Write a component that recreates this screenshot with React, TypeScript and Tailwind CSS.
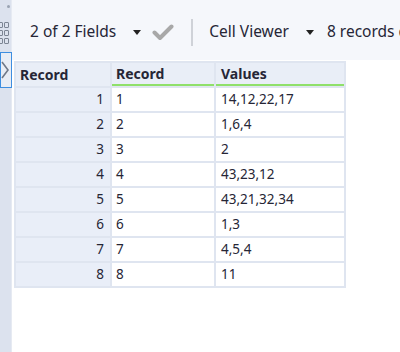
import React from "react";

const rows: [number, string][] = [
  [1, "14,12,22,17"],
  [2, "1,6,4"],
  [3, "2"],
  [4, "43,23,12"],
  [5, "43,21,32,34"],
  [6, "1,3"],
  [7, "4,5,4"],
  [8, "11"],
];

function Caret() {
  return (
    <svg width="8" height="5" viewBox="0 0 8 5" aria-hidden="true">
      <path d="M0 0 L8 0 L4 5 Z" fill="#222" />
    </svg>
  );
}

export default function App() {
  return (
    <div
      className="flex w-[400px] h-[352px] overflow-hidden bg-white text-[#262636]"
      style={{ fontFamily: '"Segoe UI", "Noto Sans", "Open Sans", sans-serif' }}
    >
      {/* Left rail */}
      <div className="w-[12px] shrink-0 bg-[#dce2ee] border-r border-[#e6eaf2] flex flex-col items-start">
        <div className="w-[3px] h-[3px] rounded-full bg-[#9aa3b2] ml-[7px] mt-[5px]" />
        <div className="mt-[14px] grid grid-cols-2 gap-[2px] w-[10px] -ml-[2px]">
          {Array.from({ length: 6 }).map((_, i) => (
            <div key={i} className="w-[5px] h-[6px] border border-[#7c8594] rounded-[1px]" />
          ))}
        </div>
        <div className="mt-[8px] w-[12px] h-[36px] border border-[#3e8ee0] bg-[#e9edf5] flex items-center">
          <svg width="10" height="20" viewBox="0 0 10 20" aria-hidden="true">
            <path d="M1 2 L7 10 L1 18" fill="none" stroke="#707888" strokeWidth="1.6" />
          </svg>
        </div>
      </div>

      {/* Main */}
      <div className="flex-1 flex flex-col min-w-0">
        <div className="h-[60px] shrink-0 pt-[4px] bg-[#f5f7fb] flex items-center whitespace-nowrap text-[15.5px] overflow-hidden">
          <span className="ml-[18px] shrink-0">2 of 2 Fields</span>
          <span className="ml-[17px] mt-[1px] flex shrink-0"><Caret /></span>
          <svg className="ml-[11px] shrink-0" width="22" height="18" viewBox="0 0 22 18" aria-hidden="true">
            <path d="M2.5 9.5 L8 15 L19.5 3.5" fill="none" stroke="#a8a8a8" strokeWidth="4" strokeLinejoin="round" strokeLinecap="round" />
          </svg>
          <div className="ml-[17px] w-[2px] h-[27px] bg-[#cfd2d8] shrink-0" />
          <span className="ml-[16px] shrink-0">Cell Viewer</span>
          <span className="ml-[17px] mt-[1px] flex shrink-0"><Caret /></span>
          <span className="ml-[13px] shrink-0">8 records displayed</span>
        </div>

        <div className="pt-[1px] pl-[2px]">
          <table className="border-separate border-spacing-[2px] text-[13.5px] leading-none bg-[#dfe5f0]">
            <thead>
              <tr className="h-[23px] bg-[#e9eef7] font-bold text-[14px]">
                <th className="w-[94px] text-left pl-[4px] font-bold">Record</th>
                <th className="w-[102px] text-left pl-[4px] font-bold border-b-[2px] border-[#8fe06a]">Record</th>
                <th className="w-[128px] text-left pl-[5px] font-bold border-b-[2px] border-[#8fe06a]">Values</th>
              </tr>
            </thead>
            <tbody>
              {rows.map(([n, v]) => (
                <tr key={n} className="h-[23px]">
                  <td className="bg-[#e9eef8] text-right pr-[6px]">{n}</td>
                  <td className="bg-white pl-[4px]">{n}</td>
                  <td className="bg-white pl-[5px]">{v}</td>
                </tr>
              ))}
            </tbody>
          </table>
        </div>
      </div>
    </div>
  );
}
